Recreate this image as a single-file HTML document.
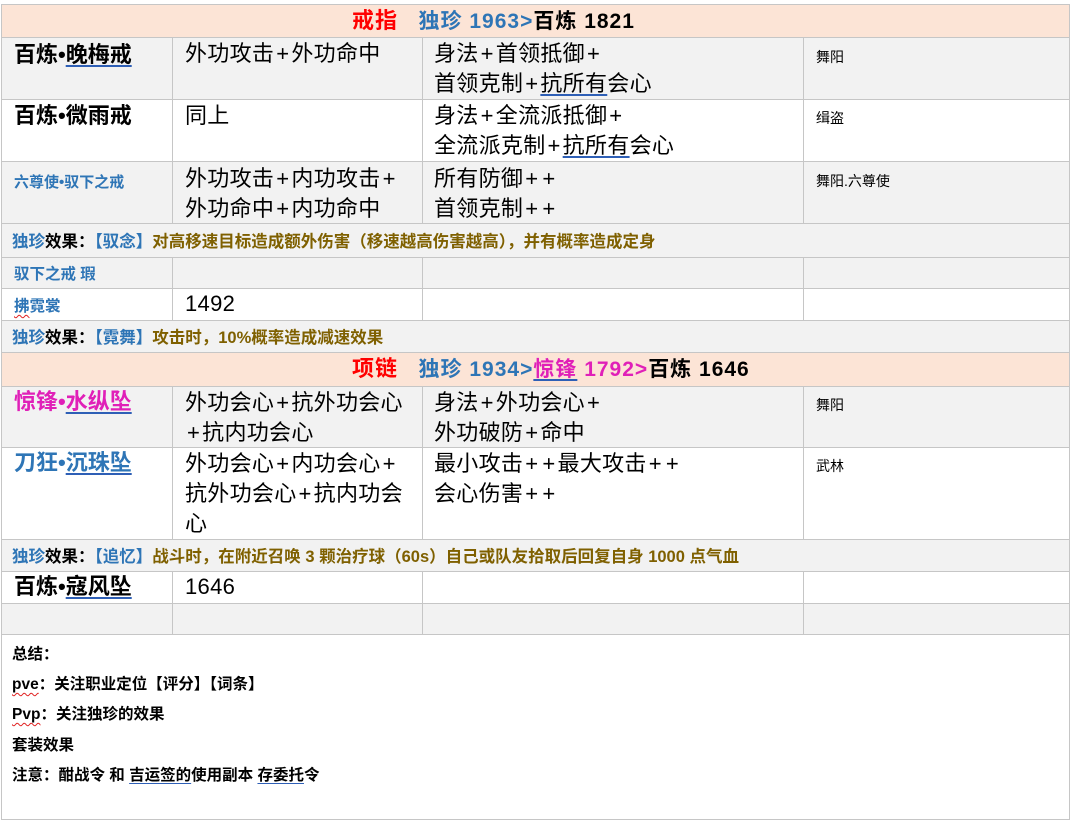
<!DOCTYPE html>
<html><head><meta charset="utf-8"><style>
*{margin:0;padding:0;box-sizing:border-box}
body{width:1070px;height:824px;background:#fff;position:relative;overflow:hidden;font-family:"Liberation Sans","Noto Sans CJK SC",sans-serif;color:#000}
.r{position:absolute;left:1px;width:1069px;border:1px solid #c6c6c6;border-top:none}
.c{position:absolute;top:0;bottom:0;border-left:1px solid #c6c6c6}
.t{position:absolute;white-space:nowrap}
.g{background:#f2f2f2}.p{background:#fce4d6}.w{background:#fff}
.big{font-size:22px;line-height:30px;letter-spacing:0.3px}
.pl{padding:0 2px}
.nm{font-size:22px;font-weight:bold;line-height:30px}
.sm{font-size:14px;line-height:20px}
.ef{font-size:16.5px;font-weight:bold;line-height:20px}
.ef2{font-size:15.5px;font-weight:bold;line-height:20px}
.hd{font-size:21px;font-weight:bold;line-height:24px;letter-spacing:1px}
.b{color:#2e75b6}.o{color:#7f6000}.m{color:#e020b8}
.u{text-decoration:underline;text-decoration-color:#2e5fb6;text-underline-offset:3px}
.wv{text-decoration:underline wavy #e02020;text-underline-offset:3px;text-decoration-thickness:1px}
</style></head><body>
<div class="r p" style="top:4px;height:34px;border-top:1px solid #c6c6c6"><div class="t hd" style="left:350px;top:4px"><span style="color:#ff0000;font-size:22px">戒指</span>&nbsp;&nbsp; <span class="b">独珍 1963&gt;</span>百炼 1821</div></div>

<div class="r g" style="top:38px;height:62px"><div class="c" style="left:170px"></div><div class="c" style="left:420px"></div><div class="c" style="left:801px"></div>
<div class="t nm" style="left:12px;top:2px">百炼•<span class="u">晚梅戒</span></div>
<div class="t big" style="left:183px;top:1px">外功攻击<span class="pl">+</span>外功命中</div>
<div class="t big" style="left:432px;top:1px">身法<span class="pl">+</span>首领抵御<span class="pl">+</span><br>首领克制<span class="pl">+</span><span class="u">抗所有</span>会心</div>
<div class="t sm" style="left:814px;top:9px">舞阳</div></div>

<div class="r w" style="top:100px;height:62px"><div class="c" style="left:170px"></div><div class="c" style="left:420px"></div><div class="c" style="left:801px"></div>
<div class="t nm" style="left:12px;top:1px">百炼•微雨戒</div>
<div class="t big" style="left:183px;top:1px">同上</div>
<div class="t big" style="left:432px;top:1px">身法<span class="pl">+</span>全流派抵御<span class="pl">+</span><br>全流派克制<span class="pl">+</span><span class="u">抗所有</span>会心</div>
<div class="t sm" style="left:814px;top:8px">缉盗</div></div>

<div class="r g" style="top:162px;height:62px"><div class="c" style="left:170px"></div><div class="c" style="left:420px"></div><div class="c" style="left:801px"></div>
<div class="t b" style="left:12px;top:9px;font-size:15px;font-weight:bold">六尊使•驭下之戒</div>
<div class="t big" style="left:183px;top:2px">外功攻击<span class="pl">+</span>内功攻击<span class="pl">+</span><br>外功命中<span class="pl">+</span>内功命中</div>
<div class="t big" style="left:432px;top:2px">所有防御<span class="pl">+</span><span class="pl">+</span><br>首领克制<span class="pl">+</span><span class="pl">+</span></div>
<div class="t sm" style="left:814px;top:9px">舞阳.六尊使</div></div>

<div class="r g" style="top:224px;height:34px"><div class="t ef" style="left:10px;top:8px"><span class="b">独珍</span>效果：<span class="b">【驭念】</span><span class="o">对高移速目标造成额外伤害（移速越高伤害越高），并有概率造成定身</span></div></div>

<div class="r g" style="top:258px;height:31px"><div class="c" style="left:170px"></div><div class="c" style="left:420px"></div><div class="c" style="left:801px"></div>
<div class="t ef2 b" style="left:12px;top:7px">驭下之戒 瑕</div></div>

<div class="r w" style="top:289px;height:32px"><div class="c" style="left:170px"></div><div class="c" style="left:420px"></div><div class="c" style="left:801px"></div>
<div class="t ef2 b" style="left:12px;top:8px"><span class="wv">拂</span>霓裳</div>
<div class="t big" style="left:183px;top:0px">1492</div></div>

<div class="r g" style="top:321px;height:32px"><div class="t ef" style="left:10px;top:7px"><span class="b">独珍</span>效果：<span class="b">【霓舞】</span><span class="o">攻击时，10%概率造成减速效果</span></div></div>

<div class="r p" style="top:353px;height:34px"><div class="t hd" style="left:350px;top:4px"><span style="color:#ff0000;font-size:22px">项链</span>&nbsp;&nbsp; <span class="b">独珍 1934&gt;</span><span class="m"><span class="u">惊锋</span> 1792&gt;</span>百炼 1646</div></div>

<div class="r g" style="top:387px;height:61px"><div class="c" style="left:170px"></div><div class="c" style="left:420px"></div><div class="c" style="left:801px"></div>
<div class="t nm m" style="left:12px;top:0px">惊锋•<span class="u">水纵坠</span></div>
<div class="t big" style="left:183px;top:1px">外功会心<span class="pl">+</span>抗外功会心<br><span class="pl">+</span>抗内功会心</div>
<div class="t big" style="left:432px;top:1px">身法<span class="pl">+</span>外功会心<span class="pl">+</span><br>外功破防<span class="pl">+</span>命中</div>
<div class="t sm" style="left:814px;top:8px">舞阳</div></div>

<div class="r w" style="top:448px;height:92px"><div class="c" style="left:170px"></div><div class="c" style="left:420px"></div><div class="c" style="left:801px"></div>
<div class="t nm b" style="left:12px;top:0px">刀狂•<span class="u">沉珠坠</span></div>
<div class="t big" style="left:183px;top:1px">外功会心<span class="pl">+</span>内功会心<span class="pl">+</span><br>抗外功会心<span class="pl">+</span>抗内功会<br>心</div>
<div class="t big" style="left:432px;top:1px">最小攻击<span class="pl">+</span><span class="pl">+</span>最大攻击<span class="pl">+</span><span class="pl">+</span><br>会心伤害<span class="pl">+</span><span class="pl">+</span></div>
<div class="t sm" style="left:814px;top:8px">武林</div></div>

<div class="r g" style="top:540px;height:32px"><div class="t ef" style="left:10px;top:7px"><span class="b">独珍</span>效果：<span class="b">【追忆】</span><span class="o">战斗时，在附近召唤 3 颗治疗球（60s）自己或队友拾取后回复自身 1000 点气血</span></div></div>

<div class="r w" style="top:572px;height:32px"><div class="c" style="left:170px"></div><div class="c" style="left:420px"></div><div class="c" style="left:801px"></div>
<div class="t nm" style="left:12px;top:0px">百炼•<span class="u">寇风坠</span></div>
<div class="t big" style="left:183px;top:0px">1646</div></div>

<div class="r g" style="top:604px;height:31px"><div class="c" style="left:170px"></div><div class="c" style="left:420px"></div><div class="c" style="left:801px"></div></div>

<div class="r w" style="top:635px;height:185px">
<div class="t ef2" style="left:10px;top:10px">总结：</div>
<div class="t ef2" style="left:10px;top:40px"><span class="wv">pve</span>：关注职业定位【评分】【词条】</div>
<div class="t ef2" style="left:10px;top:70px"><span class="wv">Pvp</span>：关注独珍的效果</div>
<div class="t ef2" style="left:10px;top:101px">套装效果</div>
<div class="t ef2" style="left:10px;top:131px">注意：酣战令 和 <span class="u">吉运签的</span>使用副本 <span class="u">存委托</span>令</div>
</div>
</body></html>
